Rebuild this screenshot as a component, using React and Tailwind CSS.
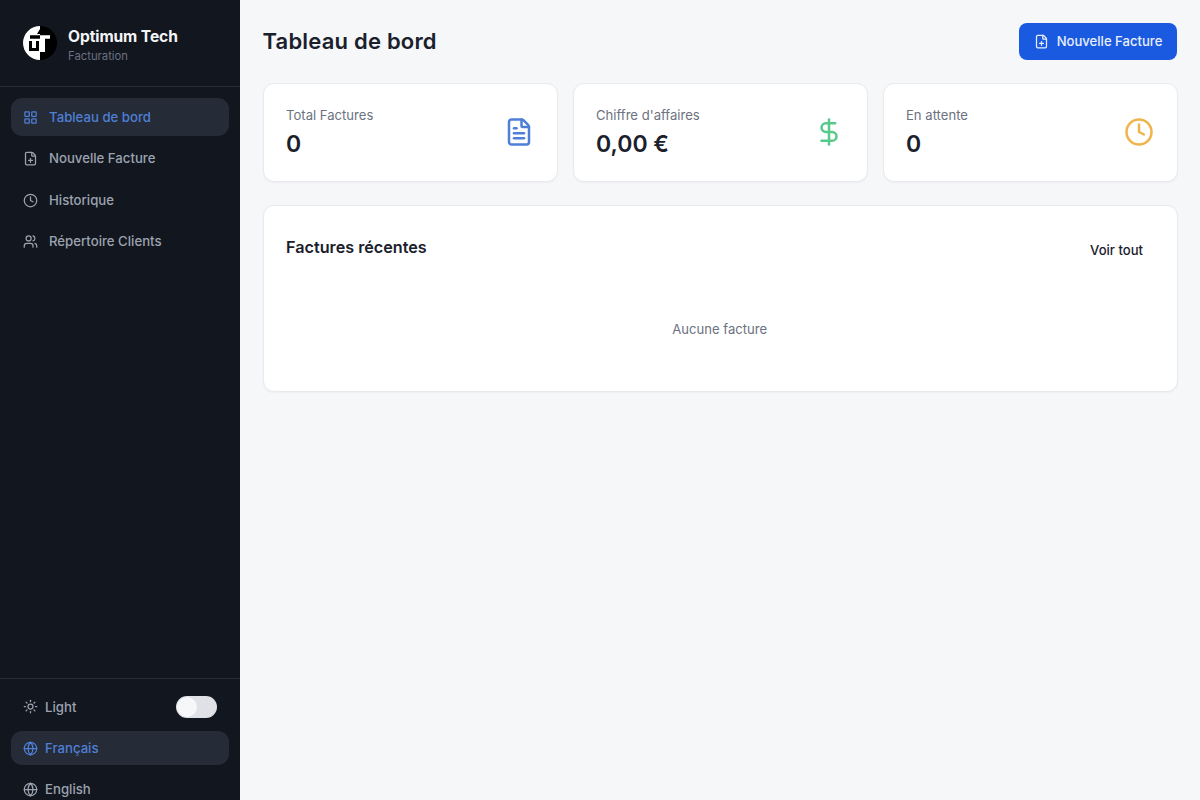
import { LayoutGrid, FilePlus, Clock, Users, Sun, Globe, FileText, DollarSign } from "lucide-react";

const navItems = [
  { label: "Tableau de bord", icon: LayoutGrid, active: true },
  { label: "Nouvelle Facture", icon: FilePlus },
  { label: "Historique", icon: Clock },
  { label: "Répertoire Clients", icon: Users },
];

const stats = [
  { label: "Total Factures", value: "0", icon: FileText, color: "text-[#4f7fd6]" },
  { label: "Chiffre d'affaires", value: "0,00 €", icon: DollarSign, color: "text-[#57c98a]" },
  { label: "En attente", value: "0", icon: Clock, color: "text-[#f0b44c]" },
];

function Logo() {
  return (
    <svg viewBox="0 0 34 34" className="w-[34px] h-[34px] shrink-0">
      <circle cx="17" cy="17" r="17" fill="#000" />
      <path d="M17 0A17 17 0 0 0 17 34Z" fill="#fff" />
      <path d="M14 8L17 3V9.3H7V12.7H17V8Z" fill="#000" />
      <path d="M6 15H9V22H13V15H16V25H6Z" fill="#000" />
      <path d="M17 9.3H27V12.7H22V26H17Z" fill="#fff" />
    </svg>
  );
}

export default function App() {
  return (
    <div className="flex h-[800px] overflow-hidden bg-[#f5f7f9] font-['Inter',sans-serif]">
      <aside className="w-[240px] shrink-0 flex flex-col bg-[#12161f]">
        <div className="h-[87px] shrink-0 flex items-center gap-[11px] px-[23px] border-b border-[#252b37]">
          <Logo />
          <div className="pt-[4px]">
            <div className="text-[15.6px] leading-[20px] font-bold text-[#f3f4f6] tracking-[-0.1px]">Optimum Tech</div>
            <div className="text-[11.3px] leading-[16px] text-[#6b7280] mt-[1px]">Facturation</div>
          </div>
        </div>
        <nav className="flex-1 flex flex-col gap-[3.5px] px-[11px] pt-[11px]">
          {navItems.map((item) => (
            <a
              key={item.label}
              className={
                "h-[38px] flex items-center gap-[11.5px] px-[11.5px] rounded-[11px] text-[13.2px] font-medium " +
                (item.active ? "bg-[#252b37] text-[#4f7fd6]" : "text-[#9ca3af]")
              }
            >
              <item.icon size={15} strokeWidth={2} />
              <span className="pt-[1px]">{item.label}</span>
            </a>
          ))}
        </nav>
        <div className="h-[122px] shrink-0 border-t border-[#252b37] px-[11px] pt-[11px] flex flex-col gap-[7px]">
          <div className="h-[34px] shrink-0 flex items-center justify-between pl-[11.5px] pr-[12px]">
            <div className="flex items-center gap-[7.5px] text-[13.2px] font-medium text-[#9ca3af]">
              <Sun size={15} />
              <span className="pt-[1px]">Light</span>
            </div>
            <div className="w-[41px] h-[22px] rounded-full bg-[#dfe1e6] p-[1px]">
              <div className="w-[20px] h-[20px] rounded-full bg-[#f6f7f9]" />
            </div>
          </div>
          <div className="h-[34px] shrink-0 flex items-center gap-[7.5px] px-[11.5px] rounded-[11px] bg-[#252b37] text-[13.2px] font-medium text-[#4f7fd6]">
            <Globe size={15} />
            <span className="pt-[1px]">Français</span>
          </div>
          <div className="h-[34px] shrink-0 flex items-center gap-[7.5px] px-[11.5px] text-[13.2px] font-medium text-[#9ca3af]">
            <Globe size={15} />
            <span className="pt-[1px]">English</span>
          </div>
        </div>
      </aside>
      <main className="flex-1 px-[22.5px] pt-[22.5px]">
        <div className="flex items-center justify-between h-[37px]">
          <h1 className="text-[22px] font-semibold text-[#1a202c] tracking-[0.2px]">Tableau de bord</h1>
          <button className="w-[158px] h-[37px] mr-[0.5px] flex items-center justify-center gap-[8px] rounded-[8px] bg-[#1a5ae0] text-[13.1px] font-medium text-[#e8eefc]">
            <FilePlus size={15} />
            <span className="pt-[1px]">Nouvelle Facture</span>
          </button>
        </div>
        <div className="grid grid-cols-3 gap-[15px] mt-[23px]">
          {stats.map((s) => (
            <div key={s.label} className="h-[99px] flex items-center justify-between pl-[22.5px] pr-[22.5px] rounded-[11px] bg-white border border-[#e8eaee] shadow-[0_1px_2px_rgba(0,0,0,0.04)]">
              <div>
                <div className="text-[13.1px] leading-[20px] text-[#6b7280]">{s.label}</div>
                <div className="text-[23px] leading-[32px] font-semibold text-[#1a202c] mt-[3px]">{s.value}</div>
              </div>
              <s.icon size={30} strokeWidth={2} className={s.color} />
            </div>
          ))}
        </div>
        <section className="h-[187px] mt-[23px] pl-[22.5px] pr-[23px] pt-[30px] rounded-[11px] bg-white border border-[#e8eaee] shadow-[0_1px_2px_rgba(0,0,0,0.04)]">
          <div className="flex items-start justify-between">
            <h2 className="text-[16.2px] leading-[22px] font-semibold text-[#1a202c]">Factures récentes</h2>
            <button className="text-[13.1px] font-medium leading-[20px] text-[#1a202c] mr-[10.5px] mt-[4px]">Voir tout</button>
          </div>
          <p className="text-center text-[13.1px] leading-[20px] text-[#6b7280] mt-[59px]">Aucune facture</p>
        </section>
      </main>
    </div>
  );
}
